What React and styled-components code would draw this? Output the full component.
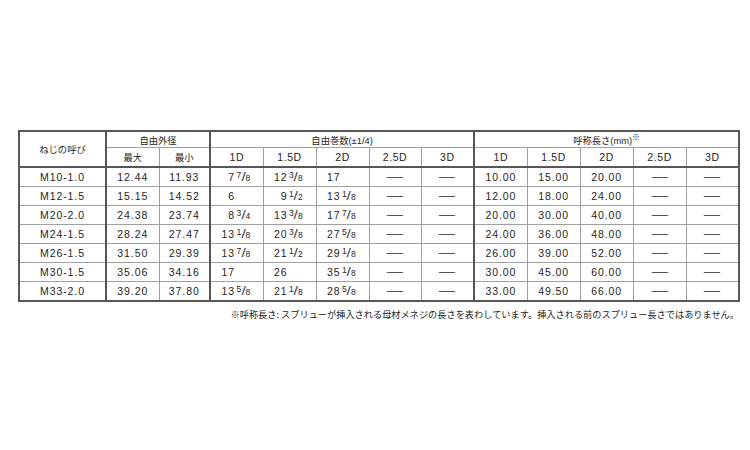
import React from 'react';
import styled, { createGlobalStyle } from 'styled-components';

const GlobalStyle = createGlobalStyle`
  html, body {
    margin: 0;
    padding: 0;
    background: #fff;
  }
  body {
    width: 750px;
    height: 450px;
    overflow: hidden;
    font-family: "Liberation Sans", "Noto Sans CJK JP", sans-serif;
    color: #262626;
  }
`;

const Page = styled.div`
  padding: 130px 0 0 18px;
  width: 721px;
`;

const Table = styled.table`
  border-collapse: collapse;
  table-layout: fixed;
  width: 721px;
  border: 2px solid #575757;
`;

const Th = styled.th`
  font-weight: normal;
  font-size: ${(p) => (p.$jp ? '9.3px' : '10.5px')};
  letter-spacing: ${(p) => (p.$jp ? '0' : '0.6px')};
  height: ${(p) => (p.$top ? '15px' : '18px')};
  padding: 0;
  text-align: center;
  border: 1px solid #a0a0a0;
  border-left: ${(p) => (p.$thick ? '2px solid #575757' : '1px solid #a0a0a0')};
  border-bottom: ${(p) => (p.$bottom ? '2px solid #575757' : '1px solid #a0a0a0')};
  white-space: nowrap;
`;

const Td = styled.td`
  font-size: 10.5px;
  letter-spacing: 0.9px;
  height: 18px;
  padding: ${(p) => (p.$frac ? '0 0 0 9px' : '0')};
  text-align: ${(p) => (p.$frac ? 'left' : 'center')};
  border: 1px solid #a0a0a0;
  border-left: ${(p) => (p.$thick ? '2px solid #575757' : '1px solid #a0a0a0')};
  white-space: nowrap;
`;

const Whole = styled.span`
  display: inline-block;
  width: 15px;
  text-align: right;
`;

const Frac = styled.span`
  display: inline-block;
  margin-left: 1.5px;
  letter-spacing: 0;
`;

const Num = styled.span`
  font-size: 8.5px;
  position: relative;
  top: -3px;
`;

const Slash = styled.span`
  display: inline-block;
  font-size: 12px;
  margin: 0 0.5px;
  transform: scaleX(1.3);
  color: #444;
`;

const Den = styled.span`
  font-size: 8.5px;
`;

const Dash = styled.span`
  display: inline-block;
  font-family: "Noto Sans CJK JP", sans-serif;
  font-weight: 500;
  font-size: 11px;
  line-height: 11px;
  color: #2e2e2e;
  letter-spacing: 0;
  transform: scaleX(1.85);
`;

const Mark = styled.span`
  font-family: "Noto Sans CJK JP", sans-serif;
  font-size: 8px;
  color: #333;
  position: relative;
  top: -4px;
`;

const Note = styled.p`
  margin: 5px 0 0;
  text-align: right;
  font-family: "Noto Sans CJK JP", sans-serif;
  font-size: 9.2px;
  color: #262626;
  white-space: nowrap;
`;

const widths = [87, 53, 51, 53, 53, 53, 52, 53, 53, 53, 53, 53, 53];

const rows = [
  ['M10-1.0', '12.44', '11.93', [7, '7', '8'], [12, '3', '8'], [17], '10.00', '15.00', '20.00'],
  ['M12-1.5', '15.15', '14.52', [6], [9, '1', '2'], [13, '1', '8'], '12.00', '18.00', '24.00'],
  ['M20-2.0', '24.38', '23.74', [8, '3', '4'], [13, '3', '8'], [17, '7', '8'], '20.00', '30.00', '40.00'],
  ['M24-1.5', '28.24', '27.47', [13, '1', '8'], [20, '3', '8'], [27, '5', '8'], '24.00', '36.00', '48.00'],
  ['M26-1.5', '31.50', '29.39', [13, '7', '8'], [21, '1', '2'], [29, '1', '8'], '26.00', '39.00', '52.00'],
  ['M30-1.5', '35.06', '34.16', [17], [26], [35, '1', '8'], '30.00', '45.00', '60.00'],
  ['M33-2.0', '39.20', '37.80', [13, '5', '8'], [21, '1', '8'], [28, '5', '8'], '33.00', '49.50', '66.00'],
];

const steps = ['1D', '1.5D', '2D', '2.5D', '3D'];

const Mixed = ({ value }) => (
  <>
    <Whole>{value[0]}</Whole>
    {value[1] && (
      <Frac>
        <Num>{value[1]}</Num>
        <Slash>/</Slash>
        <Den>{value[2]}</Den>
      </Frac>
    )}
  </>
);

const Row = ({ data }) => {
  const [name, max, min, f1, f2, f3, l1, l2, l3] = data;
  return (
    <tr>
      <Td>{name}</Td>
      <Td $thick>{max}</Td>
      <Td>{min}</Td>
      <Td $thick $frac><Mixed value={f1} /></Td>
      <Td $frac><Mixed value={f2} /></Td>
      <Td $frac><Mixed value={f3} /></Td>
      <Td><Dash>—</Dash></Td>
      <Td><Dash>—</Dash></Td>
      <Td $thick>{l1}</Td>
      <Td>{l2}</Td>
      <Td>{l3}</Td>
      <Td><Dash>—</Dash></Td>
      <Td><Dash>—</Dash></Td>
    </tr>
  );
};

export default function App() {
  return (
    <>
      <GlobalStyle />
      <Page>
        <Table>
          <colgroup>
            {widths.map((w, i) => (
              <col key={i} style={{ width: w }} />
            ))}
          </colgroup>
          <thead>
            <tr>
              <Th $jp rowSpan={2} $bottom>ねじの呼び</Th>
              <Th $jp $top $thick colSpan={2}>自由外径</Th>
              <Th $jp $top $thick colSpan={5}>自由巻数(±1/4)</Th>
              <Th $jp $top $thick colSpan={5}>
                呼称長さ(mm)<Mark>※</Mark>
              </Th>
            </tr>
            <tr>
              <Th $jp $thick $bottom>最大</Th>
              <Th $jp $bottom>最小</Th>
              {steps.map((s, i) => (
                <Th key={'a' + s} $thick={i === 0} $bottom>{s}</Th>
              ))}
              {steps.map((s, i) => (
                <Th key={'b' + s} $thick={i === 0} $bottom>{s}</Th>
              ))}
            </tr>
          </thead>
          <tbody>
            {rows.map((r) => (
              <Row key={r[0]} data={r} />
            ))}
          </tbody>
        </Table>
        <Note>
          ※呼称長さ: スプリューが挿入される母材メネジの長さを表わしています。挿入される前のスプリュー長さではありません。
        </Note>
      </Page>
    </>
  );
}
